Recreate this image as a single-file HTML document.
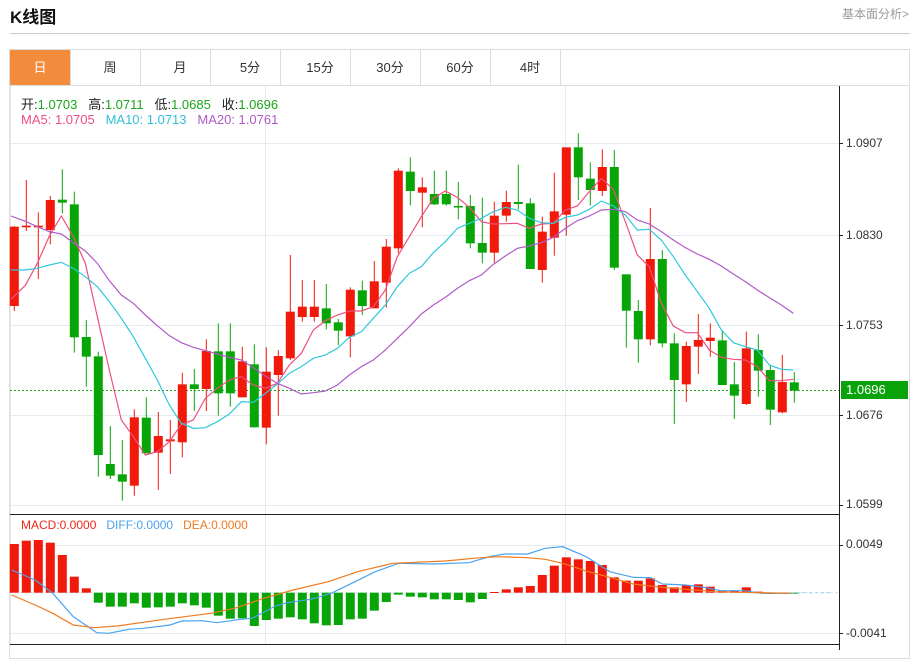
<!DOCTYPE html>
<html><head><meta charset="utf-8">
<style>
*{margin:0;padding:0;box-sizing:border-box}
body{width:919px;height:650px;background:#fff;font-family:"Liberation Sans","Noto Sans CJK SC",sans-serif;position:relative;overflow:hidden}
.title{position:absolute;left:10px;top:3px;font-size:17px;font-weight:bold;color:#111}
.more{position:absolute;right:10px;top:5px;font-size:12px;color:#999}
.hr{position:absolute;left:10px;top:33px;width:900px;height:1px;background:#ccc}
.box{position:absolute;left:9px;top:49px;width:901px;height:610px;border:1px solid #ddd}
.tabs{position:absolute;left:10px;top:50px;height:36px;width:899px;border-bottom:1px solid #ddd}
.tab{position:absolute;top:0;height:35px;width:61px;border-right:1px solid #ddd;font-size:13px;color:#333;text-align:center;line-height:36px}
.tab.on{background:#f28b3c;color:#fff}
.leg{position:absolute;left:21px;font-size:13px;white-space:nowrap}
svg{position:absolute;left:0;top:0}
.ax{position:absolute;left:846px;font-size:12px;color:#333}
</style></head><body>
<div class="title">K线图</div>
<div class="more">基本面分析&gt;</div>
<div class="hr"></div>
<div class="box"></div>
<div class="tabs">
<div class="tab on" style="left:0">日</div>
<div class="tab" style="left:70px">周</div>
<div class="tab" style="left:140px">月</div>
<div class="tab" style="left:210px">5分</div>
<div class="tab" style="left:280px">15分</div>
<div class="tab" style="left:350px">30分</div>
<div class="tab" style="left:420px">60分</div>
<div class="tab" style="left:490px">4时</div>
</div>
<svg id="s" width="919" height="650"></svg>
<div class="leg" style="top:94px;color:#222">开:<span style="color:#1aa51a">1.0703</span>&nbsp;&nbsp; 高:<span style="color:#1aa51a">1.0711</span>&nbsp;&nbsp; 低:<span style="color:#1aa51a">1.0685</span>&nbsp;&nbsp; 收:<span style="color:#1aa51a">1.0696</span></div>
<div class="leg" style="top:112px"><span style="color:#ee4f7e">MA5: 1.0705</span>&nbsp;&nbsp; <span style="color:#2fc0d8">MA10: 1.0713</span>&nbsp;&nbsp; <span style="color:#b05ac8">MA20: 1.0761</span></div>
<div class="leg" style="top:518px;font-size:12px"><span style="color:#f0281a">MACD:0.0000</span>&nbsp;&nbsp; <span style="color:#4aa3ee">DIFF:0.0000</span>&nbsp;&nbsp; <span style="color:#f07a20">DEA:0.0000</span></div>
<div class="ax" style="top:136px">1.0907</div>
<div class="ax" style="top:228px">1.0830</div>
<div class="ax" style="top:318px">1.0753</div>
<div class="ax" style="top:408px">1.0676</div>
<div class="ax" style="top:497px">1.0599</div>
<div class="ax" style="top:537px">0.0049</div>
<div class="ax" style="top:626px">-0.0041</div>
<div style="position:absolute;left:841px;top:381px;width:67px;height:18px;background:#0aa40a;color:#fff;font-size:13px;line-height:18px;padding-left:5px">1.0696</div>
<script>
var s=document.getElementById('s'),h='';
function L(x1,y1,x2,y2,c,w,d){h+='<line x1="'+x1+'" y1="'+y1+'" x2="'+x2+'" y2="'+y2+'" stroke="'+c+'" stroke-width="'+(w||1)+'"'+(d?' stroke-dasharray="'+d+'"':'')+'/>';}
// grid
[143,235,325,415,505,545,633].forEach(function(y){L(10,y+.5,839,y+.5,'#e3eaf0');});
[265.5,565.5].forEach(function(x){L(x,86,x,644,'#e3eaf0');});
L(10.5,86,10.5,644,'#e3eaf0');
L(10,514.5,839,514.5,'#222');L(10,644.5,839,644.5,'#222');
L(839.5,86,839.5,650,'#222');
[143,235,325,415,505,545,633].forEach(function(y){L(839,y+.5,843,y+.5,'#222');});
L(10,390.5,839,390.5,'#1aa51a',1,'2,2');
var R='#f0190a',G='#08a508';
var c=[[288,543,290,528,R],[150,303,287,292,R],[247,447,287,292,R],[198,343,210,300,R],[118,250,209,218,G],[185,668,223,622,G],[570,770,621,680,G],[665,1040,679,975,G],[888,1047,1002,1037,G],[930,1112,1033,1055,G],[838,1097,862,1067,R],[802,970,863,970,G],[846,1080,918,968,R],[870,1032,928,934,R],[728,982,763,937,R],[717,843,763,777,G],[628,843,663,777,R],[580,857,664,790,G],[580,830,664,790,G],[650,802,694,802,R],[643,892,703,892,G],[652,943,725,893,R],[660,857,678,735,R],[375,690,545,685,R],[450,575,530,561,R],[450,575,530,561,R],[462,598,535,580,G],[567,645,577,602,G],[472,682,479,619,R],[452,555,481,528,G],[393,535,454,535,R],[327,533,350,458,R],[115,370,122,355,R],[82,226,125,183,G]];
var c2=[[172,322,202,218,R],[152,255,222,253,G],[152,257,222,253,G],[186,298,258,260,G],[225,385,258,370,G],[233,430,369,398,G],[245,428,287,398,R],[212,305,246,287,R],[134,268,246,252,G],[235,447,250,447,G],[290,488,335,450,R],[158,407,274,353,R],[82,347,82,284,R],[40,240,82,172,G],[127,256,176,210,G],[88,228,141,213,R],[90,450,141,443,G],[463,683,463,572,G],[540,728,573,658,G],[264,676,417,658,R],[390,682,417,670,G],[640,912,670,780,G],[665,846,678,793,R],[582,762,660,680,R],[610,710,653,663,R],[630,795,661,795,G],[726,897,793,827,G],[635,855,685,852,R],[643,830,690,752,G],[736,915,750,869,G],[705,880,786,877,R],[756,848,787,812,G]];
function X(i){return 14.3+12*i;}
c.forEach(function(k,i){var x=X(i);L(x,130+k[0]/3,x,130+k[1]/3,k[4]);var t=130+k[2]/3,b=130+k[3]/3;if(b-t<1.5)b=t+1.5;h+='<rect x="'+(x-4.5)+'" y="'+t+'" width="9" height="'+(b-t)+'" fill="'+k[4]+'"/>';});
c2.forEach(function(k,j){var x=X(34+j);L(x,120+k[0]/3,x,120+k[1]/3,k[4]);var t=120+k[2]/3,b=120+k[3]/3;if(b-t<1.5)b=t+1.5;h+='<rect x="'+(x-4.5)+'" y="'+t+'" width="9" height="'+(b-t)+'" fill="'+k[4]+'"/>';});
function P(a,b,ox,oy,col){var p=[];a.forEach(function(q){p.push((ox+q[0]/3)+','+(oy+q[1]/3));});b.forEach(function(q){if(q[0]>60)p.push((400+q[0]/3)+','+(120+q[1]/3));});h+='<polyline fill="none" stroke="'+col+'" stroke-width="1.2" points="'+p.join(' ')+'"/>';}
P([[33,508],[76,466],[112,400],[148,318],[184,258],[220,320],[256,400],[292,560],[328,720],[364,870],[400,920],[436,975],[472,965],[508,935],[544,883],[580,870],[616,805],[652,775],[688,750],[724,740],[760,765],[796,775],[832,760],[868,705],[904,670],[940,600],[976,572],[1012,555],[1048,543],[1084,543],[1120,530],[1156,480],[1192,380],[1228,320]],[[64,290],[100,235],[136,213],[172,232],[208,262],[244,305],[280,312],[316,311],[352,310],[388,325],[424,312],[460,310],[496,270],[532,258],[568,215],[604,175],[640,208],[676,305],[712,405],[748,440],[784,550],[820,618],[856,638],[892,638],[928,690],[964,712],[1000,718],[1036,720],[1072,740],[1108,782],[1144,782],[1180,778]],0,130,'#ee4f7e');
P([[33,420],[76,420],[112,415],[148,405],[184,397],[220,415],[256,440],[292,470],[328,515],[364,565],[400,620],[436,685],[472,750],[508,825],[544,880],[580,895],[616,893],[652,875],[688,852],[724,815],[760,817],[796,790],[832,762],[868,730],[904,710],[940,685],[976,675],[1012,655],[1048,622],[1084,605],[1120,565],[1156,525],[1192,470],[1228,430]],[[64,440],[100,398],[136,365],[172,325],[208,310],[244,295],[280,275],[316,262],[352,270],[388,295],[424,308],[460,310],[496,292],[532,285],[568,268],[604,243],[640,258],[676,285],[712,330],[748,328],[784,360],[820,410],[856,465],[892,515],[928,565],[964,630],[1000,668],[1036,680],[1072,690],[1108,735],[1144,748],[1180,750]],0,130,'#2fc8dc');
P([[33,258],[76,274],[112,290],[148,305],[184,312],[220,338],[256,363],[292,400],[328,452],[364,495],[400,520],[436,555],[472,587],[508,617],[544,638],[580,652],[616,662],[652,672],[688,682],[724,690],[760,713],[796,738],[832,760],[868,775],[904,792],[940,788],[976,783],[1012,765],[1048,735],[1084,710],[1120,690],[1156,660],[1192,625],[1228,590]],[[64,582],[100,555],[136,532],[172,505],[208,482],[244,465],[280,433],[316,408],[352,385],[388,378],[424,368],[460,352],[496,325],[532,302],[568,288],[604,270],[640,268],[676,275],[712,300],[748,312],[784,335],[820,360],[856,383],[892,402],[928,418],[964,438],[1000,462],[1036,485],[1072,510],[1108,533],[1144,555],[1180,580]],0,130,'#b05ac8');
// MACD
var z=592.7;
L(10,z,839,z,'#cfe3ee',1,'3,2');
var m=[132,122,120,128,165,230,265,308,320,320,310,323,322,320,310,316,323,347,356,355,378,360,356,352,358,370,376,375,358,356,332,306,284,290,292,298,298,300,307,297,276,268,262,258,225,197,172,178,183,195,232,242,242,235,255,262,255,253,260,272,272,262,275,282,278,278];
m.forEach(function(v,i){var y=500+v/3,x=X(i);var col=v<278?R:G;if(i>=7&&i<=39)col=G;var t=Math.min(y,z),b=Math.max(y,z);if(b-t<1)b=t+1;h+='<rect x="'+(x-4.5)+'" y="'+t+'" width="9" height="'+(b-t)+'" fill="'+col+'"/>';});
function M(a,col){var p=a.map(function(q){return (q[0]/1.706)+','+(500+q[1]/3);});h+='<polyline fill="none" stroke="'+col+'" stroke-width="1.2" points="'+p.join(' ')+'"/>';}
M([[20,210],[60,240],[90,280],[125,350],[165,398],[185,400],[220,388],[245,385],[290,375],[310,363],[345,362],[370,368],[410,358],[430,355],[470,318],[490,308],[530,298],[565,280],[600,250],[640,215],[680,190],[740,192],[800,188],[835,170],[860,162],[900,162],[930,145],[960,140],[1000,170],[1040,215],[1080,232],[1110,233],[1130,252],[1170,255],[1200,262],[1230,272],[1270,272],[1300,280],[1350,280]],'#4aa3ee');
M([[20,285],[60,315],[90,340],[125,375],[160,383],[200,378],[280,358],[360,340],[400,325],[450,295],[500,270],[560,245],[610,215],[670,190],[760,183],[820,173],[850,170],[900,173],[930,178],[960,190],[1000,213],[1040,232],[1080,252],[1130,262],[1170,268],[1220,275],[1290,278],[1350,280]],'#f07a20');
L(791,z,832,z,'#9fd8ee',1.2,'3,3');
s.innerHTML=h;
</script>
</body></html>
